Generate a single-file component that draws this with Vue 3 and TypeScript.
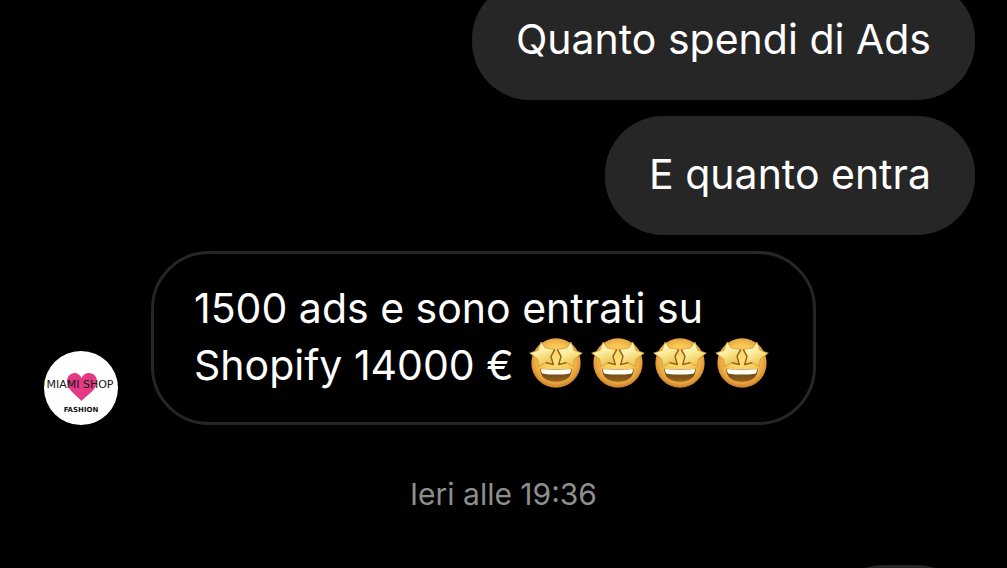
<script setup lang="ts">
const sent: string[] = ['Quanto spendi di Ads', 'E quanto entra']
const received: string = '1500 ads e sono entrati su Shopify 14000 €'
const starEyes: number = 4
const timestamp: string = 'Ieri alle 19:36'
</script>

<template>
  <main class="chat">
    <svg class="defs" aria-hidden="true">
      <defs>
        <radialGradient id="face" cx="50%" cy="45%" r="55%">
          <stop offset="0" stop-color="#ffe27a" />
          <stop offset="0.6" stop-color="#f7c552" />
          <stop offset="0.85" stop-color="#e6a03c" />
          <stop offset="1" stop-color="#c67e2c" />
        </radialGradient>
        <linearGradient id="star" x1="0" y1="0" x2="0.4" y2="1">
          <stop offset="0" stop-color="#fff8cf" />
          <stop offset="0.5" stop-color="#fdeea0" />
          <stop offset="1" stop-color="#edc450" />
        </linearGradient>
        <linearGradient id="mouth" x1="0" y1="0" x2="0" y2="1">
          <stop offset="0" stop-color="#5d3a12" />
          <stop offset="1" stop-color="#94641f" />
        </linearGradient>
        <symbol id="star-struck" viewBox="26 24 162 150">
          <circle cx="107" cy="99" r="74" fill="url(#face)" />
          <path
            d="M60 116Q107 121 154 116Q154 154 107 155Q60 154 60 116Z"
            fill="url(#mouth)"
          />
          <path
            d="M62 117Q107 122 152 117Q153 126 147 131Q107 136 67 131Q61 126 62 117Z"
            fill="#fffdf4"
          />
          <path
            d="M62 36L75 54L103 58L92 79L99 104L76 98L55 110L52 87L28 69L53 61Z"
            fill="url(#star)"
            stroke="#c8902f"
            stroke-width="2"
            stroke-linejoin="round"
          />
          <path
            d="M152 36L139 54L111 58L122 79L115 104L138 98L159 110L162 87L186 69L161 61Z"
            fill="url(#star)"
            stroke="#c8902f"
            stroke-width="2"
            stroke-linejoin="round"
          />
          <path
            d="M103 58L92 79L99 104L76 98M111 58L122 79L115 104L138 98"
            fill="none"
            stroke="#8a6120"
            stroke-width="4"
            stroke-linejoin="round"
          />
        </symbol>
      </defs>
    </svg>

    <p v-for="message in sent" :key="message" class="bubble sent">{{ message }}</p>

    <div class="incoming">
      <svg class="avatar" viewBox="0 0 74 74" role="img" aria-label="Miami Shop Fashion">
        <circle cx="37" cy="37" r="37" fill="#fff" />
        <path
          d="M37.500 50C33 45 23 39 23 30.500C23 25.500 26.500 22 30.500 22C33.500 22 36.500 24 37.500 27C38.500 24 41.500 22 45 22C49.500 22 53 25.500 53 30.500C53 39 42 45 37.500 50Z"
          fill="#e43a85"
        />
        <text class="brand" x="36" y="37">MIAMI SHOP</text>
        <text class="tagline" x="37" y="61">FASHION</text>
      </svg>
      <p class="bubble received">
        {{ received }}
        <span class="emojis" role="img" aria-label="🤩🤩🤩🤩">
          <svg v-for="n in starEyes" :key="n" class="emoji"><use href="#star-struck" /></svg>
        </span>
      </p>
    </div>

    <time class="timestamp">{{ timestamp }}</time>
    <div class="bubble sent upcoming"></div>
  </main>
</template>

<style>
body {
  margin: 0;
  background: #000;
}
</style>

<style scoped>
.chat {
  box-sizing: border-box;
  display: flex;
  flex-direction: column;
  gap: 16px;
  height: 100vh;
  overflow: hidden;
  padding: 0 32px 0 44px;
  background: #000;
  color: #fff;
  font-family: Inter, "Liberation Sans", sans-serif;
}

.defs {
  position: absolute;
  width: 0;
  height: 0;
}

.bubble {
  box-sizing: border-box;
  flex: none;
  margin: 0;
  border-radius: 58px;
  font-size: 41px;
  line-height: 57px;
}

.sent {
  align-self: flex-end;
  padding: 30px 44px 32px;
  background: #262626;
}

/* the thread is scrolled, so the oldest bubble starts above the window */
.sent:first-of-type {
  margin-top: -19px;
}

.incoming {
  display: flex;
  flex: none;
  align-items: flex-end;
  gap: 33px;
}

.avatar {
  flex: none;
  width: 74px;
  height: 74px;
}

.brand,
.tagline {
  fill: #161616;
  font-family: "DejaVu Sans", sans-serif;
  text-anchor: middle;
}

.brand {
  font-size: 11px;
}

.tagline {
  font-size: 7px;
  font-weight: 700;
}

.received {
  max-width: 665px;
  padding: 26px 40px 28px;
  border: 3px solid #262626;
}

.emojis {
  display: inline-flex;
  gap: 8px;
  margin-left: 4px;
  vertical-align: -8px;
}

.emoji {
  width: 54px;
  height: 50px;
}

.timestamp {
  align-self: center;
  margin: 33px 0 35px;
  padding-right: 12px;
  color: #8e8e8e;
  font-size: 30px;
  line-height: 40px;
}

.upcoming {
  width: 150px;
  height: 118px;
}
</style>
